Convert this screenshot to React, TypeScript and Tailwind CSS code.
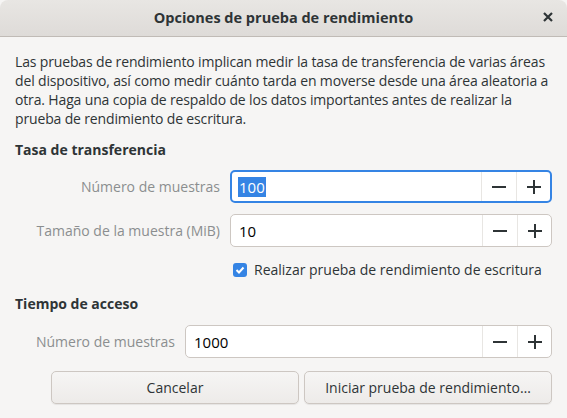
import React from "react";

const F = { fontFamily: '"Open Sans", "Noto Sans", sans-serif' };

function Minus() {
  return (
    <svg width="16" height="16" viewBox="0 0 16 16">
      <rect x="1" y="7" width="14" height="2" fill="#2e3436" />
    </svg>
  );
}
function Plus() {
  return (
    <svg width="16" height="16" viewBox="0 0 16 16">
      <rect x="1" y="7" width="14" height="2" fill="#2e3436" />
      <rect x="7" y="1" width="2" height="14" fill="#2e3436" />
    </svg>
  );
}

function Spin({ value, focused }: { value: string; focused?: boolean }) {
  return (
    <div
      className={
        "flex h-[33px] rounded-[5px] bg-white " +
        (focused ? "border-2 border-[#3584e4]" : "border border-[#cdc7c2]")
      }
    >
      <div className={"flex flex-1 items-center " + (focused ? "pl-[6px]" : "pl-[7px]")}>
        {focused ? (
          <span className="bg-[#3584e4] px-[1px] text-[15px] leading-[20px] text-white">{value}</span>
        ) : (
          <span className="px-[1px] text-[15px] leading-[20px] text-black">{value}</span>
        )}
      </div>
      <div className="flex w-[35px] items-center justify-center border-l border-[#e8e6e3]">
        <Minus />
      </div>
      <div className="flex w-[34px] items-center justify-center border-l border-[#e8e6e3]">
        <Plus />
      </div>
    </div>
  );
}

export default function App() {
  return (
    <div className="h-[418px] w-[567px] overflow-hidden bg-[#f6f5f4] text-[#2e3436]" style={F}>
      <div className="relative flex h-[37px] items-center justify-center rounded-t-[8px] border-b border-[#c0bbb6] bg-gradient-to-b from-[#e8e6e3] to-[#dedbd8]">
        <span className="text-[14.5px] font-bold">Opciones de prueba de rendimiento</span>
        <span className="absolute right-[12px] top-[10px]">
          <svg width="14" height="14" viewBox="0 0 14 14">
            <path d="M3 3 L11 11 M11 3 L3 11" stroke="#2e3436" strokeWidth="2.2" />
          </svg>
        </span>
      </div>
      <div className="flex flex-col px-[15px]">
        <p className="mt-[15px] whitespace-nowrap text-[14px] leading-[19px] tracking-[-0.15px]">
          Las pruebas de rendimiento implican medir la tasa de transferencia de varias áreas
          <br />
          del dispositivo, así como medir cuánto tarda en moverse desde una área aleatoria a
          <br />
          otra. Haga una copia de respaldo de los datos importantes antes de realizar la
          <br />
          prueba de rendimiento de escritura.
        </p>
        <div className="mt-[12px] text-[14px] font-bold leading-[19px]">Tasa de transferencia</div>
        <div className="mt-[11px] grid grid-cols-[190px_1fr] items-center gap-x-[10px] gap-y-[11px] pl-[15px]">
          <div className="text-right text-[14px] text-[#8b8e8f]">Número de muestras</div>
          <Spin value="100" focused />
          <div className="text-right text-[14px] text-[#8b8e8f]">Tamaño de la muestra (MiB)</div>
          <Spin value="10" />
          <div />
          <div className="mt-[2px] flex items-center gap-[7px] pl-[3px]">
            <span className="flex h-[14px] w-[14px] items-center justify-center rounded-[3px] bg-[#3584e4]">
              <svg width="10" height="10" viewBox="0 0 10 10">
                <path d="M1.5 5 L4 7.5 L8.5 2.5" stroke="white" strokeWidth="2" fill="none" />
              </svg>
            </span>
            <span className="text-[14px] leading-[19px]">Realizar prueba de rendimiento de escritura</span>
          </div>
        </div>
        <div className="mt-[15px] text-[14px] font-bold leading-[19px]">Tiempo de acceso</div>
        <div className="mt-[12px] grid grid-cols-[145px_1fr] items-center gap-x-[10px] pl-[15px]">
          <div className="text-right text-[14px] text-[#8b8e8f]">Número de muestras</div>
          <Spin value="1000" />
        </div>
        <div className="mt-[13px] flex gap-[5px] pl-[36px]">
          <button className="h-[33px] flex-1 rounded-[5px] border border-[#cdc7c2] bg-gradient-to-b from-[#f6f5f4] to-[#edebe9] text-[14px] shadow-[0_1px_1px_rgba(0,0,0,0.07)]">
            Cancelar
          </button>
          <button className="h-[33px] flex-1 rounded-[5px] border border-[#cdc7c2] bg-gradient-to-b from-[#f6f5f4] to-[#edebe9] text-[14px] shadow-[0_1px_1px_rgba(0,0,0,0.07)]">
            Iniciar prueba de rendimiento…
          </button>
        </div>
      </div>
    </div>
  );
}
